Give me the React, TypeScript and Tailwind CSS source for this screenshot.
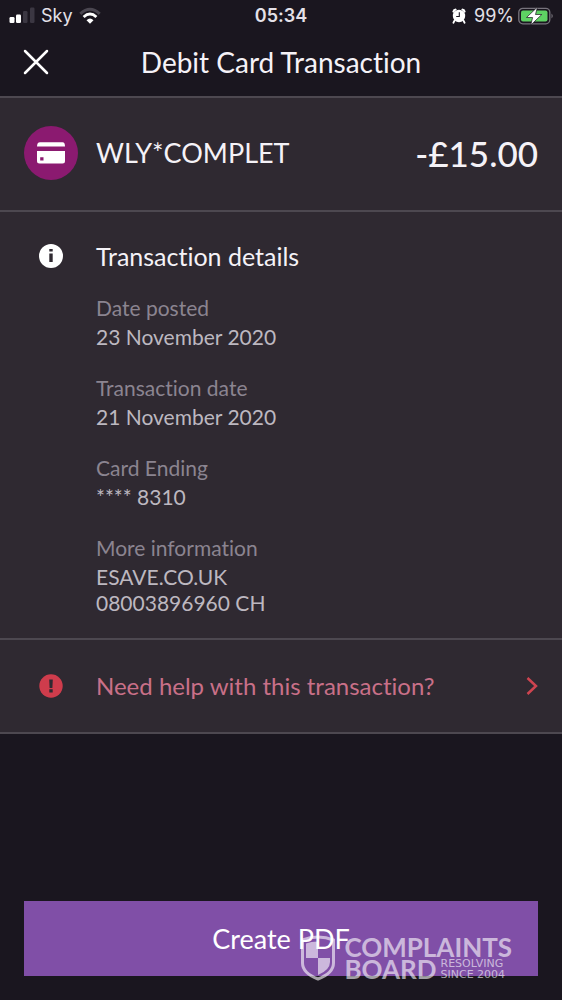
import React from "react";

const details: { label: string; lines: string[] }[] = [
  { label: "Date posted", lines: ["23 November 2020"] },
  { label: "Transaction date", lines: ["21 November 2020"] },
  { label: "Card Ending", lines: ["**** 8310"] },
  { label: "More information", lines: ["ESAVE.CO.UK", "08003896960 CH"] },
];

function StatusBar() {
  return (
    <div className="grid h-8 grid-cols-[1fr_auto_1fr] items-center px-2 font-['Inter',sans-serif] text-[18px] leading-8 text-[#e4e1e8]">
      <div className="flex items-center">
        <svg width="27" height="18" viewBox="0 0 27 18" aria-label="Signal strength">
          <rect x="1.5" y="10" width="5" height="6" rx="1.2" fill="#fff" />
          <rect x="8" y="7.5" width="5" height="8.500" rx="1.2" fill="#fff" />
          <rect x="15" y="4" width="4.500" height="12" rx="1.2" fill="#3b3742" />
          <rect x="22" y="0.500" width="4.500" height="15.500" rx="1.2" fill="#3b3742" />
        </svg>
        <span className="ml-1.5">Sky</span>
        <svg className="ml-1.5" width="22" height="18" viewBox="0 0 22 18" aria-label="Wi-Fi">
          <path d="M1.300 6.800Q11-2.200 20.700 6.800" fill="none" stroke="#4a4650" strokeWidth="3" />
          <path d="M4.600 10Q11 4.200 17.400 10" fill="none" stroke="#fff" strokeWidth="2.900" />
          <path d="M7.500 13.200Q11 9.800 14.500 13.200L11 16.800Z" fill="#fff" />
        </svg>
      </div>
      <span className="text-[18px] font-semibold">05:34</span>
      <div className="flex items-center justify-end">
        <svg width="14" height="16" viewBox="0 0 14 16" aria-label="Alarm">
          <path d="M0.300 3.400Q1 0.800 3.800 0.600L4.800 1.500L1.200 4.900ZM13.700 3.400Q13 0.800 10.200 0.600L9.200 1.500L12.800 4.900Z" fill="#fff" />
          <circle cx="7" cy="8" r="6.200" fill="#fff" />
          <path d="M2.600 12.500L1.400 14.700M11.400 12.500L12.600 14.700" stroke="#fff" strokeWidth="1.800" strokeLinecap="round" />
          <path d="M7.300 4.200V8.500H4.200" fill="none" stroke="#1b1721" strokeWidth="1.100" />
        </svg>
        <span className="ml-2 text-[18px]">99%</span>
        <svg className="ml-1" width="36" height="18" viewBox="0 0 36 18" aria-label="Battery charging">
          <rect x="0.800" y="1.300" width="31" height="15.500" rx="4" fill="none" stroke="#77737c" strokeWidth="1.300" />
          <rect x="3" y="3.500" width="26.500" height="11" rx="2" fill="#5ed363" />
          <path d="M33.500 6.500Q36 9 33.500 11.500Z" fill="#77737c" />
          <path d="M19.500 0L8.500 10.500H14.600L12.800 18L23.800 7.500H17.500Z" fill="#fff" stroke="#1b1721" strokeWidth="0.700" />
        </svg>
      </div>
    </div>
  );
}

function Watermark() {
  return (
    <div className="pointer-events-none absolute top-[34px] right-[26px] flex items-center gap-2 text-white/60">
      <svg width="36" height="46" viewBox="0 0 36 46" aria-hidden="true">
        <path d="M18 2Q26 2 33.500 5V28Q33.500 38 18 44Q2.500 38 2.500 28V5Q10 2 18 2Z" fill="none" stroke="currentColor" strokeWidth="3" />
        <path d="M18 6.500Q11 6.500 6 8.500V23H18ZM18 23V40Q30 35 30 27V23Z" fill="currentColor" />
      </svg>
      <div className="font-['Lato',sans-serif] text-[26px] leading-[22px] font-bold">
        <div>COMPLAINTS</div>
        <div className="flex items-center gap-1">
          <span>BOARD</span>
          <span className="font-['DejaVu_Sans',sans-serif] text-[11px] leading-[11px] font-normal">
            RESOLVING
            <br />
            SINCE 2004
          </span>
        </div>
      </div>
    </div>
  );
}

export default function App() {
  return (
    <div className="flex min-h-screen flex-col bg-[#1a161f] font-['Lato',sans-serif] text-[#f5f2f7] [font-variant-ligatures:none]">
      <StatusBar />
      <header className="grid h-16 grid-cols-[48px_1fr_48px] items-center px-3 pb-1">
        <button type="button" aria-label="Close" className="flex h-12 w-12 items-center justify-center">
          <svg width="26" height="26" viewBox="0 0 26 26" fill="none" stroke="#fff" strokeWidth="2.500" strokeLinecap="round">
            <path d="M2 2L24 24M24 2L2 24" />
          </svg>
        </button>
        <h1 className="text-center text-[28px] leading-8">Debit Card Transaction</h1>
      </header>

      <main className="bg-[#2f2931]">
        <section className="flex items-center border-y-2 border-[#4d4850] px-6 pt-7 pb-[30px]">
          <svg width="54" height="54" viewBox="0 0 54 54" aria-hidden="true">
            <circle cx="27" cy="27" r="27" fill="#8b1a70" />
            <path d="M13 20.500Q13 16.200 16 16.200H38.500Q41 16.200 41 20.500Z" fill="#fff" />
            <path d="M13 25H41V35Q41 37.500 38.500 37.500H15.500Q13 37.500 13 35ZM16.200 31.200V34.500H19.500V31.200Z" fill="#fff" fillRule="evenodd" />
          </svg>
          <h2 className="ml-[18px] text-[27px] leading-[54px]">WLY*COMPLET</h2>
          <span className="ml-auto text-[35px] leading-[54px] font-medium">-£15.00</span>
        </section>

        <section className="flex items-start px-6 pt-7 pb-[22px]">
          <svg className="mx-[15px] mt-1" width="24" height="24" viewBox="0 0 24 24" aria-hidden="true">
            <circle cx="12" cy="12" r="12" fill="#fff" />
            <path d="M10.300 5H13.700V7.400H10.300ZM10.300 9.500H13.700V18H10.300Z" fill="#2f2931" />
          </svg>
          <div className="ml-[18px]">
            <h2 className="text-[25px] leading-8">Transaction details</h2>
            <dl className="mt-[21px] flex flex-col gap-[23px]">
              {details.map((item) => (
                <div key={item.label}>
                  <dt className="pb-px text-[21px] leading-[30px] text-[#8b8490]">{item.label}</dt>
                  {item.lines.map((line) => (
                    <dd key={line} className="text-[21px] leading-[26px] text-[#bdb8c0]">
                      {line}
                    </dd>
                  ))}
                </div>
              ))}
            </dl>
          </div>
        </section>

        <a href="#help" className="flex items-center border-y-2 border-[#4d4850] px-6 py-[30px]">
          <svg className="mx-[15px]" width="24" height="24" viewBox="0 0 24 24" aria-hidden="true">
            <circle cx="12" cy="12" r="11.700" fill="#cf3c4c" />
            <path d="M10.200 5.500H13.800L13.400 14H10.600ZM10.300 15.300H13.700V18.500H10.300Z" fill="#2f2931" />
          </svg>
          <span className="ml-[18px] text-[24px] leading-8 text-[#c97088]">Need help with this transaction?</span>
          <svg className="ml-auto" width="12" height="18" viewBox="0 0 12 18" fill="none" stroke="#cf4450" strokeWidth="2.500" aria-hidden="true">
            <path d="M1.500 1L10 9L1.500 17" />
          </svg>
        </a>
      </main>

      <footer className="mt-auto px-6 pt-6 pb-6">
        <div className="relative">
          <button type="button" className="block h-[75px] w-full bg-[#804fa7] text-[27px] leading-8 text-white">
            Create PDF
          </button>
          <Watermark />
        </div>
      </footer>
    </div>
  );
}
